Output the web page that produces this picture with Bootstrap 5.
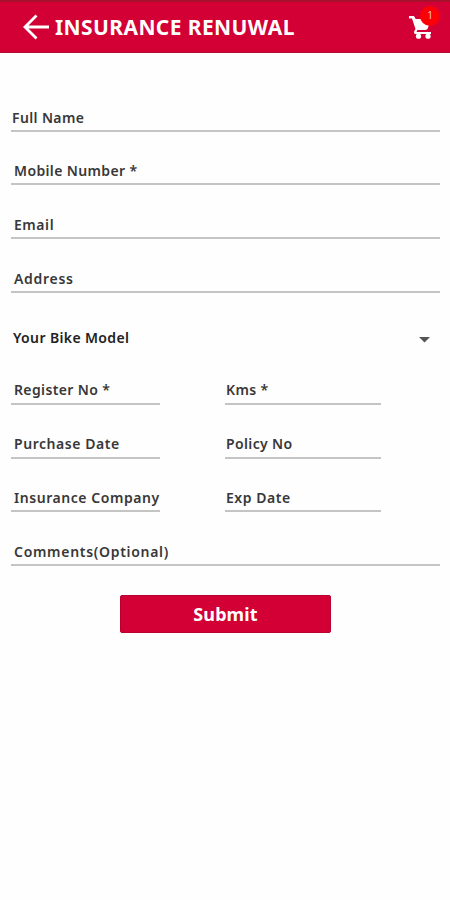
<!DOCTYPE html>
<html lang="en">
<head>
<meta charset="utf-8">
<meta name="viewport" content="width=device-width, initial-scale=1">
<title>Insurance Renuwal</title>
<link href="https://cdn.jsdelivr.net/npm/bootstrap@5.3.0/dist/css/bootstrap.min.css" rel="stylesheet">
<style>
body{font-family:"Noto Sans",sans-serif;background:#fefefe;color:#383838;height:900px;overflow:hidden}
.topbar{height:53px;background:#d20034;border-top:2px solid #a80f2d;border-bottom:1px solid #b70a32;padding:0 17px 0 22px}
.topbar h1{font-size:21px;font-weight:700;line-height:50px;margin-left:5px;letter-spacing:.4px;white-space:nowrap}
.cart-count{position:absolute;left:12px;top:-9px;width:20px;height:20px;background:#fb0007;font-size:10px;line-height:18px;color:#ffc4c4}
.renewal{padding:25px 10px 0 11px}
.field{height:54px;padding:0 0 3px 3px;border-bottom:2px solid #c4c4c4;font-size:14px;font-weight:600;line-height:18px;letter-spacing:.37px;white-space:nowrap}
.field-first{padding-left:1px}
.field-short{height:53px}
.spaced{letter-spacing:.56px}
.spaced-wide{letter-spacing:.7px}
.model{height:58px;padding:0 10px 4px 2px;font-size:14px;font-weight:600;line-height:18px;letter-spacing:.37px;color:#222}
.pairs{display:grid;grid-template-columns:149px 156px;column-gap:65px}
.pairs .field{padding-bottom:4px}
.pairs .field-short{padding-bottom:3px}
.pairs .field-right{padding-left:1px}
.submit{width:211px;height:38px;margin-top:29px;background:#d20034;border:1px solid #b9002e;border-radius:2px;font-size:18px;font-weight:700;letter-spacing:.1px;line-height:18px;padding:0}
</style>
</head>
<body>
<header class="topbar d-flex align-items-center text-white">
  <svg width="28" height="26" viewBox="0 0 28 26" fill="none" stroke="#fff" stroke-width="2.8"><path d="M27 13H3M14.5 1.5L3 13L14.5 24.5"/></svg>
  <h1 class="mb-0">INSURANCE RENUWAL</h1>
  <div class="position-relative ms-auto d-flex">
    <svg width="25" height="25" viewBox="0 0 25 25" fill="#fff"><path d="M1 1h5l1.7 3H19l3.5 2-3 8-1.9 1H9.4L8.5 17H23v2H7.3q-2-.5-1.2-2.6L7.5 14 4 3.5H1z"/><circle cx="10.5" cy="21.2" r="2.6"/><circle cx="20" cy="21.2" r="2.6"/></svg>
    <span class="cart-count rounded-circle text-center">1</span>
  </div>
</header>
<main class="renewal">
  <div class="field field-first d-flex align-items-end"><span>Full Name</span></div>
  <div class="field field-short d-flex align-items-end"><span>Mobile Number *</span></div>
  <div class="field d-flex align-items-end"><span class="spaced">Email</span></div>
  <div class="field d-flex align-items-end"><span class="spaced-wide">Address</span></div>
  <div class="model d-flex align-items-end justify-content-between"><span>Your Bike Model</span>
    <svg class="mb-1" width="11" height="6" viewBox="0 0 11 6"><path d="M0 0h11L5.5 5.5z" fill="#555"/></svg></div>
  <div class="pairs">
    <div class="field d-flex align-items-end"><span>Register No *</span></div>
    <div class="field field-right d-flex align-items-end"><span>Kms *</span></div>
    <div class="field d-flex align-items-end"><span class="spaced">Purchase Date</span></div>
    <div class="field field-right d-flex align-items-end"><span>Policy No</span></div>
    <div class="field field-short d-flex align-items-end"><span class="spaced">Insurance Company</span></div>
    <div class="field field-short field-right d-flex align-items-end"><span class="spaced">Exp Date</span></div>
  </div>
  <div class="field d-flex align-items-end"><span class="spaced-wide">Comments(Optional)</span></div>
  <button class="submit btn text-white d-block mx-auto" type="button">Submit</button>
</main>
<script src="https://cdn.jsdelivr.net/npm/bootstrap@5.3.0/dist/js/bootstrap.bundle.min.js"></script>
</body>
</html>
